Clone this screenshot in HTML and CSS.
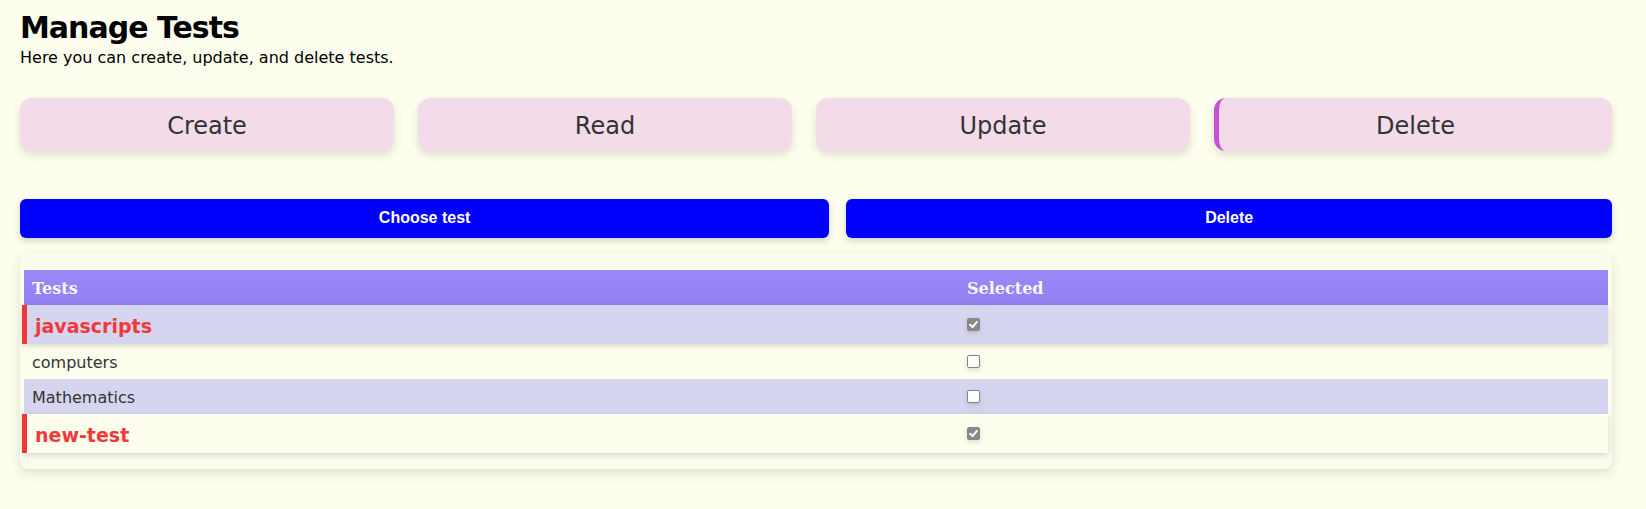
FILE: index.html
```html
<!DOCTYPE html>
<html lang="en">
<head>
<meta charset="utf-8">
<title>Manage Tests</title>
<link rel="stylesheet" href="styles.css">
</head>
<body>
<header class="intro">
  <h1 class="title">Manage Tests</h1>
  <p class="subtitle">Here you can create, update, and delete tests.</p>
</header>

<nav class="tabs">
  <button class="tab">Create</button>
  <button class="tab">Read</button>
  <button class="tab">Update</button>
  <button class="tab tab-active">Delete</button>
</nav>

<div class="actions">
  <button class="action">Choose test</button>
  <button class="action">Delete</button>
</div>

<section class="card">
  <div class="table">
    <div class="row head">
      <div class="cell">Tests</div>
      <div class="cell">Selected</div>
    </div>
    <div class="row odd selected">
      <div class="cell name">javascripts</div>
      <div class="cell"><span class="box checked"><svg viewBox="0 0 13 13" width="13" height="13"><path d="M3.2 6.8 L5.6 9.1 L9.9 3.9" fill="none" stroke="#fff" stroke-width="2" stroke-linecap="round" stroke-linejoin="round"/></svg></span></div>
    </div>
    <div class="row">
      <div class="cell name">computers</div>
      <div class="cell"><span class="box"></span></div>
    </div>
    <div class="row odd">
      <div class="cell name">Mathematics</div>
      <div class="cell"><span class="box"></span></div>
    </div>
    <div class="row selected">
      <div class="cell name">new-test</div>
      <div class="cell"><span class="box checked"><svg viewBox="0 0 13 13" width="13" height="13"><path d="M3.2 6.8 L5.6 9.1 L9.9 3.9" fill="none" stroke="#fff" stroke-width="2" stroke-linecap="round" stroke-linejoin="round"/></svg></span></div>
    </div>
  </div>
</section>
</body>
</html>
```

FILE: styles.css
```css
* { box-sizing: border-box; }

html, body {
  margin: 0;
  background: #fdfeee;
}

body {
  padding: 11px 34px 40px 20px;
  font-family: "DejaVu Sans", Verdana, sans-serif;
  color: #000;
}

.title {
  margin: 0;
  font-size: 30px;
  line-height: 34px;
  font-weight: bold;
  letter-spacing: -1px;
}

.subtitle {
  margin: 3px 0 0;
  font-size: 16px;
  line-height: 19px;
}

.tabs {
  display: flex;
  gap: 24px;
  margin-top: 31px;
}

.tab {
  flex: 1 1 0;
  border: none;
  background: #f3dbe9;
  color: #333;
  font-family: "DejaVu Sans", Verdana, sans-serif;
  font-size: 24px;
  line-height: 29px;
  padding: 14px 0 10px;
  border-radius: 12px;
  box-shadow: 0 4px 8px rgba(60, 60, 20, 0.16);
}

.tab-active {
  flex: 1 1 24px;
  border-left: 5px solid #c84fd6;
}

.actions {
  display: flex;
  gap: 17px;
  margin-top: 48px;
}

.action {
  flex: 1 1 auto;
  border: none;
  background: #0000ff;
  color: #fff;
  font-family: "Liberation Sans", Arial, sans-serif;
  font-weight: bold;
  font-size: 16px;
  line-height: 19px;
  padding: 9px 20px 11px;
  border-radius: 6px;
  box-shadow: 0 3px 7px rgba(60, 60, 20, 0.22);
}

.card {
  margin-top: 16px;
  padding: 16px 4px;
  background: #fbfcee;
  border-radius: 8px;
  box-shadow: 0 4px 12px rgba(60, 60, 20, 0.16);
}

.row {
  display: grid;
  grid-template-columns: 935px 1fr;
  align-items: center;
  background: #fdfeee;
  color: #333;
  font-size: 16px;
  line-height: 19px;
}

.cell {
  padding: 9px 8px 7px;
}

.head {
  background: linear-gradient(#9a89f7, #9180ef);
  color: #fbf6ff;
  font-family: "DejaVu Serif", Georgia, serif;
  font-weight: bold;
  font-size: 16px;
  line-height: 19px;
}

.odd {
  background: #d6d5f0;
}

.selected {
  position: relative;
  box-shadow: 0 2px 6px rgba(60, 60, 20, 0.2);
}

.selected .name {
  margin-left: -2px;
  border-left: 5px solid #f03636;
  color: #f03a3a;
  font-weight: bold;
  font-size: 19px;
  line-height: 23px;
  padding: 10px 8px 6px;
}

.box {
  display: block;
  width: 13px;
  height: 13px;
  margin-top: -2px;
  border: 1px solid #858585;
  border-radius: 2px;
  background: #fff;
  box-shadow: 0 2px 5px rgba(60, 60, 20, 0.18);
}

.box svg {
  display: block;
  margin: -1px;
}

.checked {
  background: #888;
  border-color: #888;
}
```
